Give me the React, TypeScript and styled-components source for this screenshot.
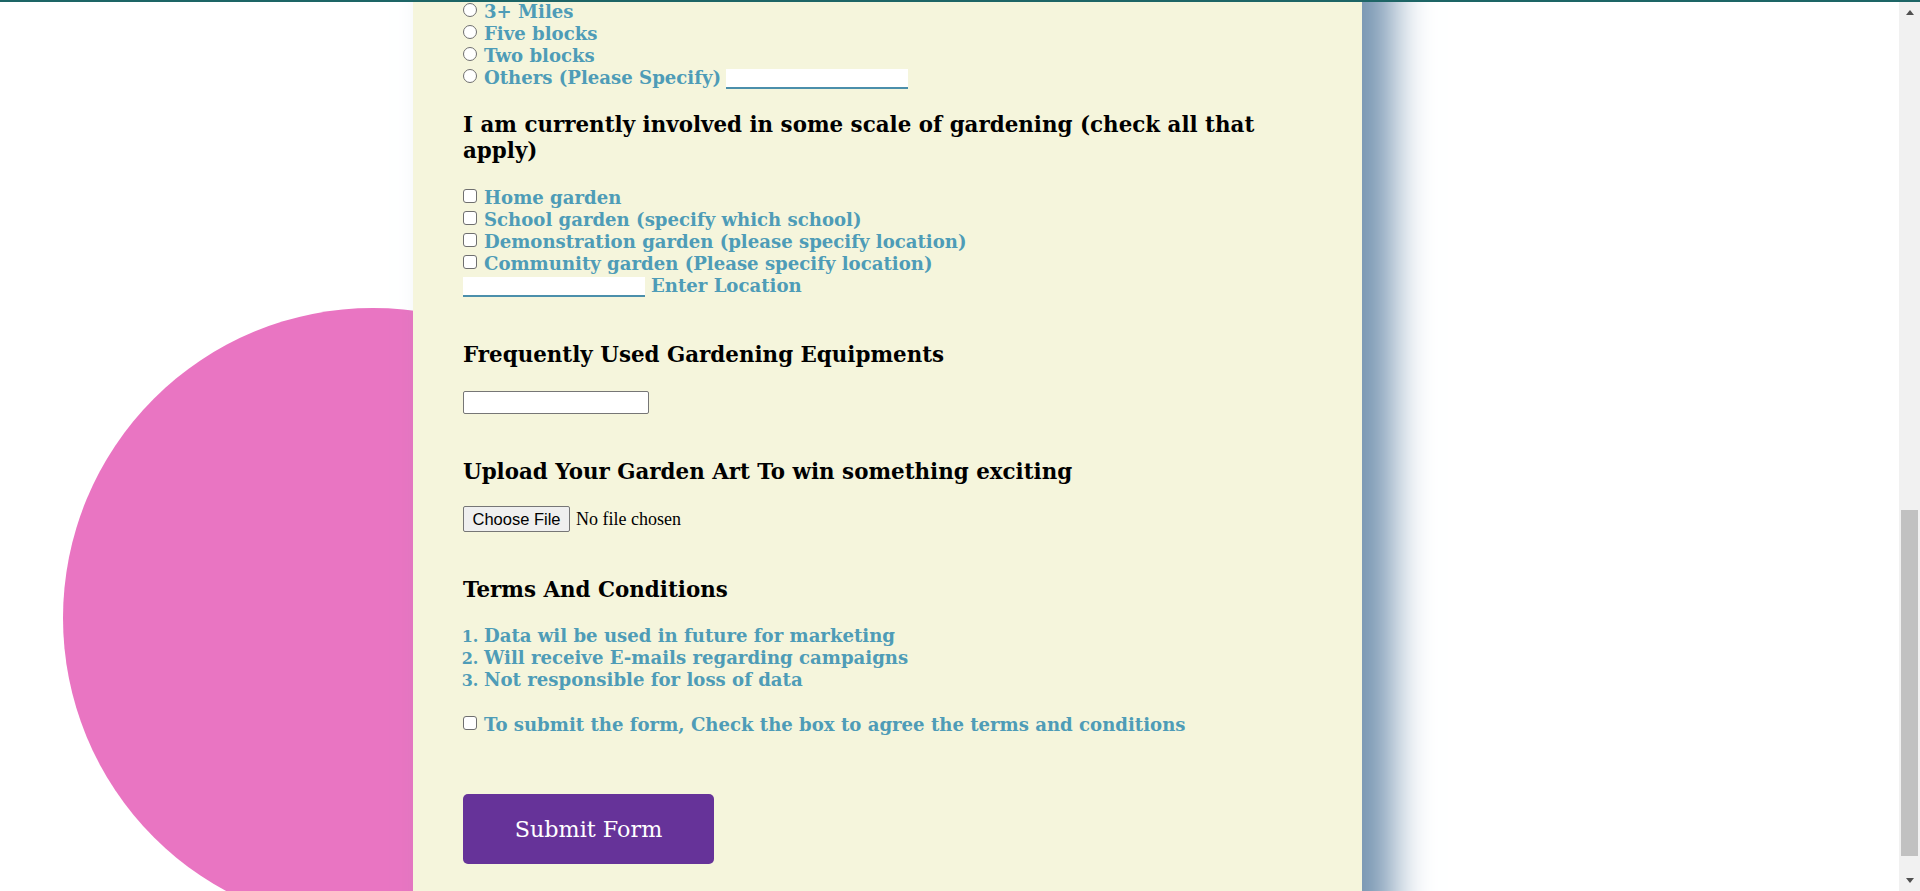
import React from "react";
import styled, { createGlobalStyle } from "styled-components";

const GlobalStyle = createGlobalStyle`
  html, body {
    margin: 0;
    padding: 0;
    height: 100%;
    overflow: hidden;
    background: #ffffff;
  }
  #root {
    height: 100%;
  }
`;

const TEAL = "#4e9cb7";
const SERIF = `"DejaVu Serif", "Liberation Serif", serif`;

const Frame = styled.div`
  display: flex;
  flex-direction: column;
  height: 100vh;
`;

const TopBar = styled.div`
  height: 2px;
  flex-shrink: 0;
  background: #1d6566;
`;

const Main = styled.div`
  flex: 1;
  display: flex;
  min-height: 0;
`;

const Viewport = styled.div`
  flex: 1;
  position: relative;
  overflow: hidden;
  display: flex;
`;

const Blob = styled.div`
  position: absolute;
  left: 63px;
  top: 306px;
  width: 620px;
  height: 620px;
  border-radius: 50%;
  background: #e975c2;
`;

const Panel = styled.form`
  position: relative;
  z-index: 1;
  margin: 0 0 0 413px;
  width: 949px;
  box-sizing: border-box;
  padding: 0 50px 27px 50px;
  background: #f5f5dc;
  display: flex;
  flex-direction: column;
  justify-content: flex-end;
  font-family: ${SERIF};
  font-weight: bold;
  color: ${TEAL};

  &::before {
    content: "";
    position: absolute;
    left: 0;
    right: 0;
    top: -120px;
    bottom: -120px;
    z-index: -1;
    pointer-events: none;
    box-shadow: 31px 0 37px #7896b2;
  }
`;

const Option = styled.label<{ $top?: number }>`
  display: flex;
  align-items: flex-start;
  flex-shrink: 0;
  margin-top: ${(p) => p.$top ?? 0}px;
  font-size: 18.1px;
  line-height: 22px;
  height: 22px;
  white-space: nowrap;
`;

const Mark = styled.input<{ $round?: boolean }>`
  appearance: none;
  -webkit-appearance: none;
  box-sizing: border-box;
  width: 14px;
  height: 14px;
  margin: 2px 7px 0 0;
  flex-shrink: 0;
  background: #ffffff;
  border: 1px solid #6f6f6f;
  border-radius: ${(p) => (p.$round ? "50%" : "3px")};

  &:checked {
    background: ${(p) =>
      p.$round
        ? "radial-gradient(circle, #0075ff 0 3px, #ffffff 3.5px)"
        : "#0075ff"};
    border-color: #0075ff;
  }
`;

const LineInput = styled.input<{ $before?: number; $after?: number }>`
  width: 182px;
  height: 20px;
  box-sizing: border-box;
  margin: 2px ${(p) => p.$after ?? 0}px 0 ${(p) => p.$before ?? 0}px;
  padding: 0 4px;
  border: none;
  border-bottom: 2px solid #4b8fab;
  background: #ffffff;
  outline: none;
  flex-shrink: 0;
`;

const Question = styled.h3<{ $top: number }>`
  margin: ${(p) => p.$top}px 0 0 0;
  flex-shrink: 0;
  font-size: 21.4px;
  line-height: 26px;
  font-weight: bold;
  color: #000000;
`;

const TextField = styled.input`
  flex-shrink: 0;
  align-self: flex-start;
  width: 186px;
  height: 23px;
  box-sizing: border-box;
  margin: 23px 0 0 0;
  padding: 1px 2px;
  border: 1px solid #767676;
  border-radius: 2px;
  background: #ffffff;
`;

const FileRow = styled.label`
  display: flex;
  align-items: center;
  gap: 6px;
  flex-shrink: 0;
  margin-top: 21px;
  height: 26px;
  cursor: pointer;
`;

const HiddenFile = styled.input`
  display: none;
`;

const FileButton = styled.span`
  display: flex;
  align-items: center;
  justify-content: center;
  width: 107px;
  height: 26px;
  box-sizing: border-box;
  border: 1px solid #767676;
  border-radius: 2px;
  background: #efefef;
  font-family: "Liberation Sans", Arial, sans-serif;
  font-weight: normal;
  font-size: 16.5px;
  color: #000000;
`;

const FileStatus = styled.span`
  font-family: "Liberation Serif", serif;
  font-weight: normal;
  font-size: 18px;
  color: #000000;
`;

const Terms = styled.ol`
  flex-shrink: 0;
  margin: 22px 0 0 0;
  padding: 0 0 0 21px;
  font-size: 18.1px;
  line-height: 22px;

  li::marker {
    font-size: 16px;
  }
`;

const Submit = styled.button`
  flex-shrink: 0;
  align-self: flex-start;
  width: 251px;
  height: 70px;
  margin-top: 58px;
  border: none;
  border-radius: 5px;
  background: #663399;
  color: #ffffff;
  font-family: ${SERIF};
  font-size: 22.3px;
  font-weight: normal;
  cursor: pointer;
`;

const Scrollbar = styled.div`
  width: 21px;
  flex-shrink: 0;
  background: #f1f1f1;
  display: flex;
  flex-direction: column;
`;

const ScrollArrow = styled.div<{ $down?: boolean }>`
  height: 21px;
  flex-shrink: 0;
  display: flex;
  align-items: center;
  justify-content: center;
  &::after {
    content: "";
    width: 0;
    height: 0;
    border-left: 4.5px solid transparent;
    border-right: 4.5px solid transparent;
    ${(p) =>
      p.$down
        ? "border-top: 5px solid #505050;"
        : "border-bottom: 5px solid #505050;"}
  }
`;

const Track = styled.div`
  flex: 1;
  display: flex;
  flex-direction: column;
  justify-content: flex-end;
  padding: 0 2px 14px 2px;
`;

const Thumb = styled.div`
  height: 346px;
  background: #c1c1c1;
`;

const distances = ["3+ Miles", "Five blocks", "Two blocks"];
const gardens = [
  "Home garden",
  "School garden (specify which school)",
  "Demonstration garden (please specify location)",
  "Community garden (Please specify location)",
];
const terms = [
  "Data wil be used in future for marketing",
  "Will receive E-mails regarding campaigns",
  "Not responsible for loss of data",
];

export default function App() {
  return (
    <>
      <GlobalStyle />
      <Frame>
        <TopBar />
        <Main>
          <Viewport>
            <Blob />
            <Panel onSubmit={(e) => e.preventDefault()}>
              {distances.map((d) => (
                <Option key={d}>
                  <Mark type="radio" name="distance" $round />
                  {d}
                </Option>
              ))}
              <Option>
                <Mark type="radio" name="distance" $round />
                Others (Please Specify)
                <LineInput type="text" $before={5} />
              </Option>

              <Question $top={23}>
                I am currently involved in some scale of gardening (check all
                that apply)
              </Question>
              {gardens.map((g, i) => (
                <Option key={g} $top={i === 0 ? 23 : 0}>
                  <Mark type="checkbox" />
                  {g}
                </Option>
              ))}
              <Option>
                <LineInput type="text" $after={6} />
                Enter Location
              </Option>

              <Question $top={45}>Frequently Used Gardening Equipments</Question>
              <TextField type="text" />

              <Question $top={45}>
                Upload Your Garden Art To win something exciting
              </Question>
              <FileRow>
                <HiddenFile type="file" />
                <FileButton>Choose File</FileButton>
                <FileStatus>No file chosen</FileStatus>
              </FileRow>

              <Question $top={45}>Terms And Conditions</Question>
              <Terms>
                {terms.map((t) => (
                  <li key={t}>{t}</li>
                ))}
              </Terms>
              <Option $top={23}>
                <Mark type="checkbox" />
                To submit the form, Check the box to agree the terms and
                conditions
              </Option>

              <Submit type="submit">Submit Form</Submit>
            </Panel>
          </Viewport>
          <Scrollbar>
            <ScrollArrow />
            <Track>
              <Thumb />
            </Track>
            <ScrollArrow $down />
          </Scrollbar>
        </Main>
      </Frame>
    </>
  );
}
